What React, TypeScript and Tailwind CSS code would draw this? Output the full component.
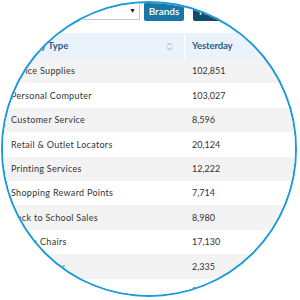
import React from "react";

const rows: [string, string][] = [
  ["Office Supplies", "102,851"],
  ["Personal Computer", "103,027"],
  ["Customer Service", "8,596"],
  ["Retail & Outlet Locators", "20,124"],
  ["Printing Services", "12,222"],
  ["Shopping Reward Points", "7,714"],
  ["Back to School Sales", "8,980"],
  ["Office Chairs", "17,130"],
  ["Photography", "2,335"],
  ["Office Furniture", "2,118"],
];

export default function App() {
  return (
    <div
      className="w-[300px] h-[300px] bg-white p-[1px]"
      style={{ fontFamily: "Lato, 'Open Sans', sans-serif" }}
    >
      <div className="w-[296px] h-[296px] rounded-full border-2 border-[#1a9bd7] overflow-hidden bg-white">
        <div className="w-[300px] -mt-[3px] -ml-[3px]">
          {/* top bar */}
          <div className="flex items-start h-[33px] pt-[1px]">
            <div className="w-[140px] h-[19px] border border-[#c8c8c8] bg-white flex items-center justify-end pr-[3px] text-[7px] text-[#222]">
              ▼
            </div>
            <div className="ml-[4px] w-[40px] h-[20px] rounded-[2px] bg-[#1a76a4] text-white text-[10px] font-semibold flex items-center justify-center">
              Brands
            </div>
            <div className="ml-[9px] w-[50px] h-[20px] rounded-[2px] bg-[#0f4c6b] text-white text-[10px] font-semibold flex items-center pl-[6px]">
              Filter
            </div>
          </div>
          {/* header */}
          <div className="flex h-[26px] bg-[#eaf3fb] text-[9.5px] font-bold text-[#2a5b88]">
            <div className="w-[185px] flex items-center justify-between pl-[11px] pr-[11px] border-r border-white">
              <span>Industry Type</span>
              <svg width="7" height="9" viewBox="0 0 7 9" fill="none" stroke="#9aa3ab" strokeWidth="1">
                <path d="M1 3.5 L3.5 1 L6 3.5" />
                <path d="M1 5.5 L3.5 8 L6 5.5" />
              </svg>
            </div>
            <div className="flex-1 flex items-center pl-[7px] tracking-[-0.1px]">Yesterday</div>
          </div>
          {/* rows */}
          {rows.map(([name, val], i) => (
            <div
              key={name}
              className={`flex h-[24.4px] items-center text-[9px] text-[#333] ${
                i % 2 === 0 ? "bg-[#f3f3f3]" : "bg-white"
              }`}
            >
              <div className="w-[185px] pl-[11px] tracking-[0.3px]">{name}</div>
              <div className="flex-1 pl-[7px]">{val}</div>
            </div>
          ))}
        </div>
      </div>
    </div>
  );
}
